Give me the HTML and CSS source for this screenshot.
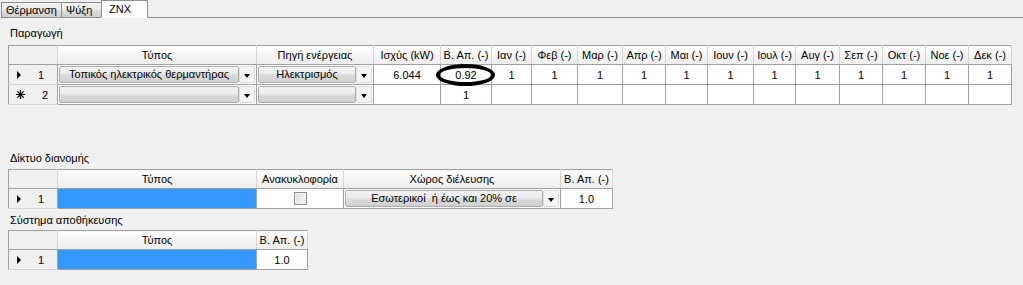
FILE: index.html
```html
<!DOCTYPE html>
<html lang="el">
  <head>
    <meta charset="UTF-8" />
    <title>ZNX</title>
    <link rel="stylesheet" href="styles.css">
  </head>
  <body>
    <div class="tabs">
      <div class="tab tab-heat">Θέρμανση</div>
      <div class="tab tab-cool">Ψύξη</div>
      <div class="tab tab-dhw active">ΖΝΧ</div>
      <div class="tab-rest"></div>
    </div>
    <div class="page">
      <div class="label label-prod">Παραγωγή</div>
      <table class="grid">
        <colgroup>
          <col style="width:49px"><col style="width:199px"><col style="width:117px"><col style="width:67px">
          <col style="width:51px"><col style="width:40px"><col style="width:46px"><col style="width:45px">
          <col style="width:43px"><col style="width:42px"><col style="width:46px"><col style="width:42px">
          <col style="width:44px"><col style="width:43px"><col style="width:43px"><col style="width:43px">
          <col style="width:43px">
        </colgroup>
        <tr>
          <th class="corner"></th>
          <th>Τύπος</th>
          <th>Πηγή ενέργειας</th>
          <th>Ισχύς (kW)</th>
          <th>Β. Απ. (-)</th>
          <th>Ιαν (-)</th>
          <th>Φεβ (-)</th>
          <th>Μαρ (-)</th>
          <th>Απρ (-)</th>
          <th>Μαι (-)</th>
          <th>Ιουν (-)</th>
          <th>Ιουλ (-)</th>
          <th>Αυγ (-)</th>
          <th>Σεπ (-)</th>
          <th>Οκτ (-)</th>
          <th>Νοε (-)</th>
          <th>Δεκ (-)</th>
        </tr>
        <tr>
          <td class="rowhead"><span class="mark arrow"></span><span class="num">1</span></td>
          <td class="combo-cell">
            <div class="combo"><span class="combo-text">Τοπικός ηλεκτρικός θερμαντήρας</span><span class="combo-btn"></span></div>
          </td>
          <td class="combo-cell">
            <div class="combo"><span class="combo-text">Ηλεκτρισμός</span><span class="combo-btn"></span></div>
          </td>
          <td>6.044</td>
          <td class="marked">0.92<span class="ring"></span></td>
          <td>1</td><td>1</td><td>1</td><td>1</td><td>1</td><td>1</td>
          <td>1</td><td>1</td><td>1</td><td>1</td><td>1</td><td>1</td>
        </tr>
        <tr>
          <td class="rowhead">
            <svg class="mark star" width="9" height="9" viewBox="0 0 9 9">
              <path d="M4.5 0v9M0 4.5h9M1.3 1.3l6.4 6.4M7.7 1.3l-6.4 6.4" stroke="#000" stroke-width="1.2"/>
            </svg><span class="num">2</span>
          </td>
          <td class="combo-cell">
            <div class="combo"><span class="combo-text"></span><span class="combo-btn"></span></div>
          </td>
          <td class="combo-cell">
            <div class="combo"><span class="combo-text"></span><span class="combo-btn"></span></div>
          </td>
          <td></td>
          <td>1</td>
          <td></td><td></td><td></td><td></td><td></td><td></td>
          <td></td><td></td><td></td><td></td><td></td><td></td>
        </tr>
      </table>

      <div class="label label-net">Δίκτυο διανομής</div>
      <table class="grid">
        <colgroup>
          <col style="width:49px"><col style="width:199px"><col style="width:87px"><col style="width:217px"><col style="width:52px">
        </colgroup>
        <tr>
          <th class="corner"></th>
          <th>Τύπος</th>
          <th>Ανακυκλοφορία</th>
          <th>Χώρος διέλευσης</th>
          <th>Β. Απ. (-)</th>
        </tr>
        <tr>
          <td class="rowhead"><span class="mark arrow"></span><span class="num">1</span></td>
          <td class="selected"></td>
          <td><span class="check"></span></td>
          <td class="combo-cell">
            <div class="combo"><span class="combo-text">Εσωτερικοί&nbsp; ή έως και 20% σε</span><span class="combo-btn"></span></div>
          </td>
          <td>1.0</td>
        </tr>
      </table>

      <div class="label label-store">Σύστημα αποθήκευσης</div>
      <table class="grid">
        <colgroup>
          <col style="width:49px"><col style="width:199px"><col style="width:51px">
        </colgroup>
        <tr>
          <th class="corner"></th>
          <th>Τύπος</th>
          <th>Β. Απ. (-)</th>
        </tr>
        <tr>
          <td class="rowhead"><span class="mark arrow"></span><span class="num">1</span></td>
          <td class="selected"></td>
          <td>1.0</td>
        </tr>
      </table>
    </div>
  </body>
</html>
```
FILE: styles.css
```css
body {
  margin: 0;
  padding: 0;
  background-color: #f0f0f0;
  font-family: "Liberation Sans", Arial, sans-serif;
  font-size: 11px;
  color: #000;
}
.tabs {
  display: flex;
  align-items: flex-end;
  height: 18px;
  background-color: #f0f0f0;
}
.tab {
  box-sizing: border-box;
  height: 16px;
  line-height: 14px;
  padding-left: 4px;
  border: 1px solid #8c8e94;
  border-bottom: 1px solid #8c8e94;
  background: linear-gradient(#f2f2f2, #ebebeb 50%, #dddddd 50%, #cfcfcf);
  margin-right: -1px;
}
.tab-heat {
  width: 61px;
  margin-left: 1px;
}
.tab-cool {
  width: 41px;
}
.tab-dhw {
  width: 47px;
}
.tab.active {
  height: 18px;
  line-height: 16px;
  padding-left: 7px;
  background: #fff;
  border-bottom: 1px solid #fff;
  position: relative;
  z-index: 1;
}
.tab-rest {
  flex: 1;
  height: 1px;
  border-bottom: 1px solid #8c8e94;
  margin-bottom: 0;
  margin-left: 1px;
}
.page {
  padding: 0 0 0 8px;
  background-color: #f0f0f0;
}
.label {
  height: 13px;
  line-height: 13px;
  padding-left: 2px;
}
.label-prod {
  padding-top: 9px;
  margin-bottom: 5px;
}
.label-net {
  padding-top: 47px;
  margin-bottom: 4px;
}
.label-store {
  padding-top: 5px;
  margin-bottom: 3px;
}
.grid {
  border-collapse: collapse;
  table-layout: fixed;
  border: 1px solid #a0a0a0;
  background-color: #fff;
}
.grid th {
  height: 18px;
  padding: 0;
  font-weight: normal;
  text-align: center;
  white-space: nowrap;
  overflow: hidden;
  background: linear-gradient(#ffffff, #f5f5f5 50%, #eeeeee);
  border-right: 1px solid #d5d5d5;
  border-bottom: 1px solid #a0a0a0;
}
.grid th.corner {
  background: #f0f0f0;
}
.grid td {
  height: 19px;
  padding: 0;
  text-align: center;
  white-space: nowrap;
  border: 1px solid #a0a0a0;
}
.grid td.rowhead {
  background-color: #f0f0f0;
  border-top: 1px solid #d5d5d5;
  border-bottom: 1px solid #d5d5d5;
  text-align: left;
  padding-left: 7px;
}
.mark {
  display: inline-block;
  vertical-align: middle;
}
.arrow {
  width: 0;
  height: 0;
  margin-left: 1px;
  border-top: 4px solid transparent;
  border-bottom: 4px solid transparent;
  border-left: 4px solid #000;
}
.star {
  margin-top: -2px;
}
.num {
  display: inline-block;
  margin-left: 17px;
  vertical-align: middle;
}
.grid td.selected {
  background-color: #3399ff;
}
.grid td.combo-cell {
  padding: 0 1px;
}
.combo {
  display: flex;
  height: 17px;
}
.combo-text {
  flex: 1;
  box-sizing: border-box;
  line-height: 15px;
  text-align: center;
  border: 1px solid #acacac;
  border-radius: 2px;
  background: linear-gradient(#f2f2f2, #ebebeb 50%, #dddddd 50%, #cfcfcf);
  overflow: hidden;
}
.combo-btn {
  position: relative;
  box-sizing: border-box;
  width: 16px;
  border: 1px solid #dcdcdc;
  border-radius: 2px;
  background: #f4f4f4;
}
.combo-btn::after {
  content: "";
  position: absolute;
  left: 4px;
  top: 7px;
  border-left: 3px solid transparent;
  border-right: 3px solid transparent;
  border-top: 4px solid #000;
}
.check {
  display: inline-block;
  box-sizing: border-box;
  width: 13px;
  height: 13px;
  vertical-align: middle;
  border: 1px solid #8f8f8f;
  background: linear-gradient(135deg, #dcdcdc, #f8f8f8);
  box-shadow: inset 0 0 0 1px #f4f4f4;
}
.grid td.marked {
  position: relative;
}
.ring {
  position: absolute;
  left: -5px;
  right: -4px;
  top: -1px;
  bottom: -2px;
  border: 4px solid #000;
  border-radius: 50%;
}
```
